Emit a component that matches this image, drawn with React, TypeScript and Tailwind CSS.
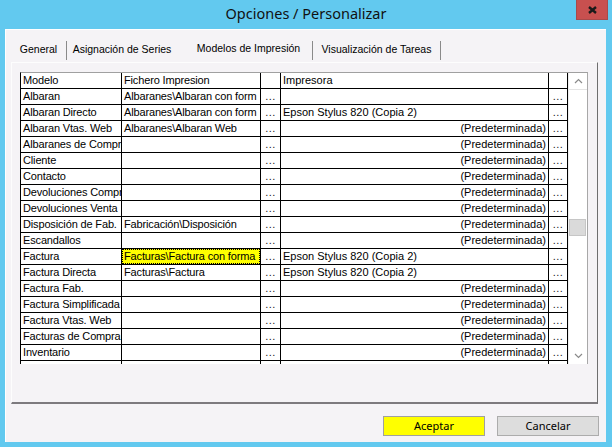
import React from "react";

type Row = { m: string; f: string; p: string; right?: boolean; hl?: boolean; blank?: boolean };

const EPSON = "Epson Stylus 820 (Copia 2)";
const PRED = "(Predeterminada)";

const rows: Row[] = [
  { m: "Albaran", f: "Albaranes\\Albaran con form", p: "" },
  { m: "Albaran Directo", f: "Albaranes\\Albaran con form", p: EPSON },
  { m: "Albaran Vtas. Web", f: "Albaranes\\Albaran Web", p: PRED, right: true },
  { m: "Albaranes de Compr", f: "", p: PRED, right: true },
  { m: "Cliente", f: "", p: PRED, right: true },
  { m: "Contacto", f: "", p: PRED, right: true },
  { m: "Devoluciones Compr", f: "", p: PRED, right: true },
  { m: "Devoluciones Venta", f: "", p: PRED, right: true },
  { m: "Disposición de Fab.", f: "Fabricación\\Disposición", p: PRED, right: true },
  { m: "Escandallos", f: "", p: PRED, right: true },
  { m: "Factura", f: "Facturas\\Factura con forma", p: EPSON, hl: true },
  { m: "Factura Directa", f: "Facturas\\Factura", p: EPSON },
  { m: "Factura Fab.", f: "", p: PRED, right: true },
  { m: "Factura Simplificada", f: "", p: PRED, right: true },
  { m: "Factura Vtas. Web", f: "", p: PRED, right: true },
  { m: "Facturas de Compra", f: "", p: PRED, right: true },
  { m: "Inventario", f: "", p: PRED, right: true },
  { m: "", f: "", p: "", blank: true },
];

const cell = "h-full border-r border-black whitespace-nowrap overflow-hidden leading-[15px]";

function Dots() {
  return <span className="text-[#222] tracking-[0.5px]">...</span>;
}

function GridRow({ r, header }: { r?: Row; header?: boolean }) {
  const showDots = !header && !r?.blank;
  return (
    <div className="flex h-[16px] shrink-0 border-b border-black">
      <div className={`${cell} w-[101px] pl-[2px] tracking-[-0.15px]`}>{header ? "Modelo" : r!.m}</div>
      <div className={`${cell} w-[139px] tracking-[-0.15px] ${r?.hl ? "p-0" : "pl-[2px]"}`}>
        {header ? (
          "Fichero Impresion"
        ) : r!.hl ? (
          <div className="h-full bg-[#ffff00] outline-1 outline-dotted outline-black -outline-offset-1 pl-[2px] overflow-hidden">
            {r!.f}
          </div>
        ) : (
          r!.f
        )}
      </div>
      <div className={`${cell} w-[20px] text-center`}>{showDots ? <Dots /> : ""}</div>
      <div className={`${cell} w-[268px] ${r?.right ? "text-right pr-[2px]" : "pl-[2px]"}`}>
        {header ? "Impresora" : r!.p}
      </div>
      <div className={`${cell} w-[19px] text-center`}>{showDots ? <Dots /> : ""}</div>
    </div>
  );
}

function Chevron({ up }: { up?: boolean }) {
  return (
    <svg width="9" height="6" viewBox="0 0 9 6">
      <polyline
        points={up ? "1,5 4.5,1.5 8,5" : "1,1 4.5,4.5 8,1"}
        fill="none"
        stroke="#8a8a8a"
        strokeWidth="1.2"
      />
    </svg>
  );
}

function Tab({ label, w, pl }: { label: string; w: string; pl?: string }) {
  return (
    <div className={`${w} ${pl ?? ""} h-full flex items-center justify-center whitespace-nowrap`}>{label}</div>
  );
}

function Sep() {
  return <div className="w-px h-[19px] self-end mb-[2px] bg-[#8a8a8a]" />;
}

export default function App() {
  return (
    <div
      className="w-[612px] h-[447px] bg-[#62c9ef] flex flex-col relative overflow-hidden"
      style={{ fontFamily: '"Liberation Sans", Arial, sans-serif' }}
    >
      {/* title bar */}
      <div className="h-[29px] shrink-0 flex items-center justify-center">
        <span
          className="text-[14.5px] text-[#111] pb-[1px]"
          style={{ fontFamily: '"Noto Sans", "Open Sans", sans-serif' }}
        >
          Opciones / Personalizar
        </span>
      </div>
      <div className="absolute top-0 right-[4px] w-[32px] h-[20px] bg-[#c8504f] border border-[#a84a4a] border-t-0 flex items-center justify-center">
        <svg width="9" height="8" viewBox="0 0 9 8">
          <path d="M1 1 L8 7 M8 1 L1 7" stroke="#1a1a1a" strokeWidth="2.4" />
        </svg>
      </div>

      {/* client area */}
      <div className="ml-[5px] mr-[6px] mb-[5px] flex-1 bg-[#f5f3f6] border-l border-t border-white flex flex-col text-[11px] text-black">
        {/* tabs */}
        <div className="h-[32px] shrink-0 flex items-end text-[10.5px]">
          <div className="flex h-[24px] ml-[5px] items-center">
            <Tab label="General" w="w-[55px]" />
            <Sep />
            <Tab label="Asignación de Series" w="w-[110px]" />
            <div className="w-[135px] h-[26px] self-end flex items-center justify-center pl-[8px] whitespace-nowrap">
              Modelos de Impresión
            </div>
            <Sep />
            <Tab label="Visualización de Tareas" w="w-[127px]" />
            <Sep />
          </div>
        </div>

        {/* panel */}
        <div className="ml-[5px] w-[587px] h-[342px] shrink-0 border-l border-t border-[#fdfdfd] border-r border-r-[#6e6e6e] border-b-2 border-b-[#7d7a7e] pl-[8px] pt-[9px]">
          <div className="w-[568px] h-[292px] flex border-t border-t-[#a0a0a0] border-l border-l-black border-r border-r-[#a8a8a8] bg-white">
            <div className="flex flex-col w-[547px] h-[291px] overflow-hidden">
              <GridRow header />
              {rows.map((r, i) => (
                <GridRow key={i} r={r} />
              ))}
            </div>
            <div className="w-[19px] h-[291px] flex flex-col bg-white border-l border-[#eeeeee]">
              <div className="h-[17px] flex items-center justify-center border-b border-[#e4e4e4]">
                <Chevron up />
              </div>
              <div className="flex-1 flex flex-col">
                <div className="mt-[129px] w-[17px] h-[17px] bg-[#dadada] border border-[#c6c6c6]" />
              </div>
              <div className="h-[17px] flex items-center justify-center">
                <Chevron />
              </div>
            </div>
          </div>
        </div>

        {/* buttons */}
        <div
          className="flex justify-end gap-[12px] mr-[7px] mt-[12px]"
          style={{ fontFamily: '"Noto Sans", "Open Sans", sans-serif' }}
        >
          <button className="w-[102px] h-[20px] bg-[#ffff00] border border-[#a0a0a0] text-[11px] leading-[18px] text-black">
            Aceptar
          </button>
          <button className="w-[102px] h-[20px] bg-[#dddddd] border border-[#acacac] text-[11px] leading-[18px] text-black">
            Cancelar
          </button>
        </div>
      </div>
    </div>
  );
}
